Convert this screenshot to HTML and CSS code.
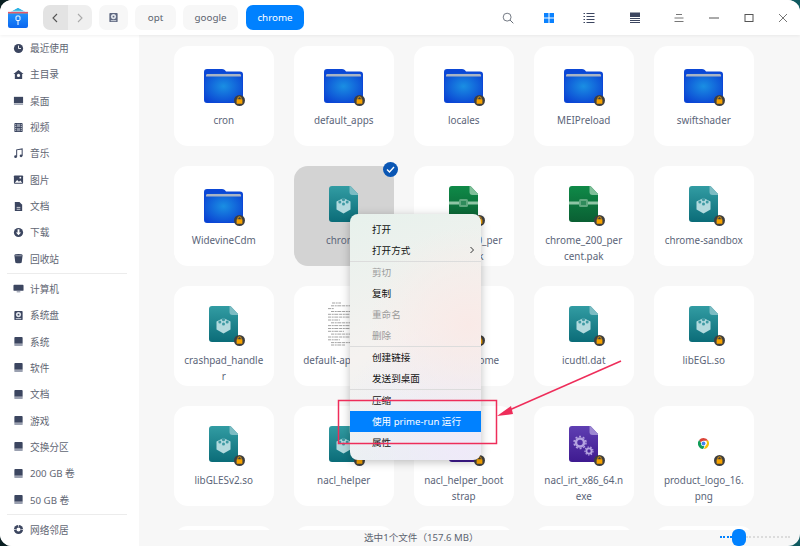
FILE: index.html
```html
<!DOCTYPE html>
<html>
<head>
    <title>chrome - 文件管理器</title>
    <link rel="stylesheet" href="styles.css">
</head>
<body>
    <svg class="sprite" xmlns="http://www.w3.org/2000/svg">
        <defs>
            <radialGradient id="g-folder" cx="0.5" cy="0.45" r="0.7">
                <stop offset="0" stop-color="#1a8fe3"/>
                <stop offset="1" stop-color="#0a3fd2"/>
            </radialGradient>
            <linearGradient id="g-teal" x1="0" y1="0" x2="0" y2="1">
                <stop offset="0" stop-color="#329ca3"/>
                <stop offset="1" stop-color="#0b6c78"/>
            </linearGradient>
            <linearGradient id="g-green" x1="0" y1="0" x2="0" y2="1">
                <stop offset="0" stop-color="#0f8a48"/>
                <stop offset="1" stop-color="#0a5f33"/>
            </linearGradient>
            <linearGradient id="g-purple" x1="0" y1="0" x2="0" y2="1">
                <stop offset="0" stop-color="#5f3fb2"/>
                <stop offset="1" stop-color="#3e1a90"/>
            </linearGradient>
            <linearGradient id="g-app" x1="0" y1="0" x2="0" y2="1">
                <stop offset="0" stop-color="#2aa0ff"/>
                <stop offset="1" stop-color="#0a66f0"/>
            </linearGradient>
        </defs>
        <symbol id="i-folder" viewBox="0 0 39 34">
            <path d="M3 0h15c2 0 3 1 4 2.500h14a3 3 0 0 1 3 3V31a3 3 0 0 1-3 3H3a3 3 0 0 1-3-3V3a3 3 0 0 1 3-3z" fill="#0b47d6"/>
            <path d="M2.500 4.500h34a1.500 1.500 0 0 1 1.500 1.500v25a2 2 0 0 1-2 2H3a2 2 0 0 1-2-2V6a1.500 1.500 0 0 1 1.500-1.500z" fill="url(#g-folder)"/>
            <path d="M2 6.500C2 5.700 2.500 5 3.500 5h32c1 0 1.500.7 1.500 1.500V7.500H2z" fill="#a9b4c4"/>
        </symbol>
        <symbol id="i-lib" viewBox="0 0 29 36">
            <path d="M3 0h18.500L29 8v25a3 3 0 0 1-3 3H3a3 3 0 0 1-3-3V3a3 3 0 0 1 3-3z" fill="url(#g-teal)"/>
            <path d="M20.500 0h1L29 8v1h-5.500a3 3 0 0 1-3-3z" fill="#7cbcc3"/>
            <path d="M7.500 15.500l7-3.500 7 3.500v8l-7 4-7-4z" fill="#b3dade"/>
            <circle cx="14.500" cy="13.500" r="1.700" fill="#3e9aa3"/>
            <circle cx="10.800" cy="16" r="1.500" fill="#3e9aa3"/>
            <circle cx="18.200" cy="16" r="1.500" fill="#3e9aa3"/>
            <circle cx="14.500" cy="18" r="1.500" fill="#3e9aa3"/>
        </symbol>
        <symbol id="i-pak" viewBox="0 0 29 36">
            <path d="M3 0h18.500L29 8v25a3 3 0 0 1-3 3H3a3 3 0 0 1-3-3V3a3 3 0 0 1 3-3z" fill="url(#g-green)"/>
            <path d="M20.500 0h1L29 8v1h-5.500a3 3 0 0 1-3-3z" fill="#7fbf99"/>
            <rect y="15.500" width="29" height="3" fill="#8fc5a5"/>
            <rect x="10" y="13" width="9" height="8" rx="1.500" fill="#5fa87f"/>
            <rect x="12" y="15" width="5" height="4" fill="#2e8b5b"/>
        </symbol>
        <symbol id="i-exe" viewBox="0 0 29 36">
            <path d="M3 0h18.500L29 8v25a3 3 0 0 1-3 3H3a3 3 0 0 1-3-3V3a3 3 0 0 1 3-3z" fill="url(#g-purple)"/>
            <path d="M20.500 0h1L29 8v1h-5.500a3 3 0 0 1-3-3z" fill="#9d88d2"/>
            <circle cx="11" cy="16.500" r="4" fill="none" stroke="#b4a3e0" stroke-width="2.500"/>
            <circle cx="11" cy="16.500" r="6" fill="none" stroke="#b4a3e0" stroke-width="1.500" stroke-dasharray="2 1.800"/>
            <circle cx="20" cy="25" r="2.600" fill="none" stroke="#b4a3e0" stroke-width="1.800"/>
            <circle cx="20" cy="25" r="4" fill="none" stroke="#b4a3e0" stroke-width="1.200" stroke-dasharray="1.500 1.300"/>
        </symbol>
        <symbol id="i-text" viewBox="0 0 32 44">
            <g stroke="#666" stroke-width="0.600" stroke-dasharray="3 0.700 2 0.600 4 0.800" fill="none">
                <path d="M4 1h9M3 3.800h22M0 6.600h6M3 9.500h22M0 12.300h26M0 15.100h26M0 18h12M3 20.800h22M0 23.600h26M0 26.500h26M0 29.300h16M3 32.100h22M0 35h26M0 37.800h12M3 40.600h22M3 43h14"/>
            </g>
        </symbol>
        <symbol id="i-lock" viewBox="0 0 11 11">
            <circle cx="5.500" cy="5.500" r="5.500" fill="#3f3f3f"/>
            <path d="M3.800 4.500V3.500a1.700 1.700 0 0 1 3.400 0v1" fill="none" stroke="#f7a300" stroke-width="0.900"/>
            <rect x="2.600" y="4.300" width="5.800" height="4.500" rx="0.600" fill="#f7a300"/>
        </symbol>
        <symbol id="i-logo" viewBox="0 0 11 11">
            <path d="M5.500 0a5.500 5.500 0 0 1 4.800 2.800H5.500a2.700 2.700 0 0 0-2.600 1.900L1.200 2A5.500 5.500 0 0 1 5.500 0z" fill="#db4437"/>
            <path d="M10.300 2.800A5.500 5.500 0 0 1 5.900 11l2-3.900a2.700 2.700 0 0 0 0-4.300z" fill="#f4c20d"/>
            <path d="M1.200 2l2.400 4.300a2.700 2.700 0 0 0 2.900 1.900L5.100 11A5.500 5.500 0 0 1 1.200 2z" fill="#0f9d58"/>
            <circle cx="5.500" cy="5.500" r="2.500" fill="#fff"/>
            <circle cx="5.500" cy="5.500" r="1.900" fill="#4285f4"/>
        </symbol>
        <symbol id="s-recent" viewBox="0 0 12 12">
            <circle cx="6" cy="6" r="5" fill="currentColor"/>
            <path d="M6 2.800V6h2.700" fill="none" stroke="#fff" stroke-width="1"/>
        </symbol>
        <symbol id="s-home" viewBox="0 0 12 12">
            <path d="M6 1l5.500 4.500H10V11H2V5.500H.5z" fill="currentColor"/>
            <circle cx="6" cy="7" r="1.700" fill="#fff"/>
        </symbol>
        <symbol id="s-desktop" viewBox="0 0 12 12">
            <rect x="1" y="2" width="10" height="7" fill="currentColor"/>
            <rect x="1" y="9.500" width="10" height="1.200" fill="#8d94a5"/>
        </symbol>
        <symbol id="s-video" viewBox="0 0 12 12">
            <rect x="1.500" y="1" width="9" height="10" rx="1" fill="currentColor"/>
            <path d="M3 2.500v7M9 2.500v7" stroke="#fff" stroke-width="1" stroke-dasharray="1 1"/>
            <rect x="4.300" y="2" width="3.400" height="3.500" fill="#8d94a5"/>
            <rect x="4.300" y="6.500" width="3.400" height="3.500" fill="#8d94a5"/>
        </symbol>
        <symbol id="s-music" viewBox="0 0 12 12">
            <path d="M4 9.500V2l6-1v7.500" fill="none" stroke="currentColor" stroke-width="1.100"/>
            <circle cx="2.800" cy="9.500" r="1.500" fill="currentColor"/>
            <circle cx="8.800" cy="8.500" r="1.500" fill="currentColor"/>
        </symbol>
        <symbol id="s-picture" viewBox="0 0 12 12">
            <rect x="1" y="1.500" width="10" height="9" rx="1" fill="currentColor"/>
            <path d="M2 9.500l2.500-3 2 2 1.500-1.500 2 2.500z" fill="#fff"/>
            <circle cx="8" cy="4" r="1" fill="#fff"/>
        </symbol>
        <symbol id="s-doc" viewBox="0 0 12 12">
            <path d="M2 1h5l3 3v7H2z" fill="currentColor"/>
            <path d="M4 7h4M4 9h4" stroke="#fff" stroke-width="0.800"/>
        </symbol>
        <symbol id="s-download" viewBox="0 0 12 12">
            <circle cx="6" cy="6" r="5" fill="currentColor"/>
            <path d="M5 2.500h2V6h1.800L6 9 3.200 6H5z" fill="#fff"/>
        </symbol>
        <symbol id="s-trash" viewBox="0 0 12 12">
            <path d="M1.500 2.500a4.500 1.500 0 0 1 9 0L9.500 10a3.500 1.200 0 0 1-7 0z" fill="currentColor"/>
            <path d="M2.500 3h7" stroke="#fff" stroke-width="0.500"/>
        </symbol>
        <symbol id="s-computer" viewBox="0 0 12 12">
            <rect x="0.500" y="2" width="11" height="6.500" rx="1" fill="currentColor"/>
            <rect x="4" y="9" width="4" height="1.200" fill="#8d94a5"/>
        </symbol>
        <symbol id="s-disk" viewBox="0 0 12 12">
            <rect x="1.500" y="1" width="9" height="10" rx="1" fill="currentColor"/>
            <circle cx="6" cy="5" r="2.800" fill="#dfe3ea"/>
            <circle cx="6" cy="5" r="1" fill="currentColor"/>
            <rect x="3" y="9" width="6" height="1" fill="#dfe3ea"/>
        </symbol>
        <symbol id="s-drive" viewBox="0 0 12 12">
            <path d="M2.500 1h7a1 1 0 0 1 1 1v6.500h-9V2a1 1 0 0 1 1-1z" fill="currentColor"/>
            <rect x="1.500" y="8.500" width="9" height="2.500" rx="0.500" fill="#9aa0b0"/>
        </symbol>
        <symbol id="s-network" viewBox="0 0 12 12">
            <circle cx="6" cy="6" r="5" fill="currentColor"/>
            <circle cx="6" cy="6" r="2.200" fill="#fff"/>
            <path d="M1 6h2M9 6h2M6 1v2" stroke="#fff" stroke-width="0.800"/>
        </symbol>
    </svg>

    <div class="window">
        <div class="toolbar">
            <svg class="app-logo" viewBox="0 0 20 20">
                <path d="M0 5.500L10 0l10 5.500V18a2 2 0 0 1-2 2H2a2 2 0 0 1-2-2z" fill="url(#g-app)"/>
                <path d="M0 5.500L10 0l10 5.500V6H0z" fill="#2bb5e0"/>
                <path d="M0 3.800h20V5.500H0z" fill="#e4566b"/>
                <path d="M0 2.800h20v1H0z" fill="#f1f4f8" opacity="0.800"/>
                <rect x="8" y="8" width="4" height="4.500" rx="1" fill="none" stroke="#fff"/>
                <path d="M10 12.500v4.500" stroke="#fff"/>
            </svg>
            <div class="nav">
                <button class="nav-btn nav-back">
                    <svg viewBox="0 0 10 10"><path d="M7 1L3 5l4 4" fill="none" stroke="#555" stroke-width="1.100"/></svg>
                </button>
                <button class="nav-btn nav-next">
                    <svg viewBox="0 0 10 10"><path d="M3 1l4 4-4 4" fill="none" stroke="#aaa" stroke-width="1.100"/></svg>
                </button>
            </div>
            <div class="crumb crumb-disk"><svg class="side-icon"><use href="#s-disk"/></svg></div>
            <div class="crumb crumb-opt">opt</div>
            <div class="crumb crumb-google">google</div>
            <div class="crumb crumb-chrome">chrome</div>

            <div class="tools">
                <svg class="tool" viewBox="0 0 14 14"><circle cx="6" cy="6" r="4.600" fill="none" stroke="#5d6570" stroke-width="1"/><path d="M9.400 9.400l3.800 3.800" stroke="#5d6570" stroke-width="1.100"/></svg>
                <svg class="tool" viewBox="0 0 12 12"><path d="M1 1h4.500v4.500H1zM6.500 1H11v4.500H6.500zM1 6.500h4.500V11H1zM6.500 6.500H11V11H6.500z" fill="#0a82ff"/></svg>
                <svg class="tool" viewBox="0 0 12 12"><path d="M3.500 1.500H11.500M3.500 4.500H11.500M3.500 7.500H11.500M3.500 10.500H11.500" stroke="#3c4660"/><path d="M.5 1.500H2M.5 4.500H2M.5 7.500H2M.5 10.500H2" stroke="#3c4660"/></svg>
                <svg class="tool" viewBox="0 0 12 12"><rect x="1" y="0.500" width="10" height="4.500" fill="#3c4660"/><path d="M1 6.500h10M1 8.500h10M1 10.500h10" stroke="#3c4660"/></svg>
                <svg class="tool" viewBox="0 0 12 12"><path d="M3 2.500h6M1.500 6h9M1.500 9.500h9" stroke="#777"/></svg>
                <svg class="tool" viewBox="0 0 12 12"><path d="M1 6h10" stroke="#555"/></svg>
                <svg class="tool" viewBox="0 0 12 12"><rect x="2" y="2.500" width="8" height="7" fill="none" stroke="#555"/></svg>
                <svg class="tool" viewBox="0 0 12 12"><path d="M2 2l8 8M10 2l-8 8" stroke="#666" stroke-width="0.900"/></svg>
            </div>
        </div>

        <div class="main">
            <div class="sidebar">
                <div class="side-item"><svg class="side-icon"><use href="#s-recent"/></svg>最近使用</div>
                <div class="side-item"><svg class="side-icon"><use href="#s-home"/></svg>主目录</div>
                <div class="side-item"><svg class="side-icon"><use href="#s-desktop"/></svg>桌面</div>
                <div class="side-item"><svg class="side-icon"><use href="#s-video"/></svg>视频</div>
                <div class="side-item"><svg class="side-icon"><use href="#s-music"/></svg>音乐</div>
                <div class="side-item"><svg class="side-icon"><use href="#s-picture"/></svg>图片</div>
                <div class="side-item"><svg class="side-icon"><use href="#s-doc"/></svg>文档</div>
                <div class="side-item"><svg class="side-icon"><use href="#s-download"/></svg>下载</div>
                <div class="side-item"><svg class="side-icon"><use href="#s-trash"/></svg>回收站</div>
                <div class="side-line"></div>
                <div class="side-item"><svg class="side-icon"><use href="#s-computer"/></svg>计算机</div>
                <div class="side-item"><svg class="side-icon"><use href="#s-disk"/></svg>系统盘</div>
                <div class="side-item"><svg class="side-icon"><use href="#s-drive"/></svg>系统</div>
                <div class="side-item"><svg class="side-icon"><use href="#s-drive"/></svg>软件</div>
                <div class="side-item"><svg class="side-icon"><use href="#s-drive"/></svg>文档</div>
                <div class="side-item"><svg class="side-icon"><use href="#s-drive"/></svg>游戏</div>
                <div class="side-item"><svg class="side-icon"><use href="#s-drive"/></svg>交换分区</div>
                <div class="side-item"><svg class="side-icon"><use href="#s-drive"/></svg>200 GB 卷</div>
                <div class="side-item"><svg class="side-icon"><use href="#s-drive"/></svg>50 GB 卷</div>
                <div class="side-line"></div>
                <div class="side-item"><svg class="side-icon"><use href="#s-network"/></svg>网络邻居</div>
            </div>

            <div class="content">
                <div class="grid">
                    <div class="card"><div class="thumb"><svg class="folder"><use href="#i-folder"/></svg><svg class="lock"><use href="#i-lock"/></svg></div><div class="name">cron</div></div>
                    <div class="card"><div class="thumb"><svg class="folder"><use href="#i-folder"/></svg><svg class="lock"><use href="#i-lock"/></svg></div><div class="name">default_apps</div></div>
                    <div class="card"><div class="thumb"><svg class="folder"><use href="#i-folder"/></svg><svg class="lock"><use href="#i-lock"/></svg></div><div class="name">locales</div></div>
                    <div class="card"><div class="thumb"><svg class="folder"><use href="#i-folder"/></svg><svg class="lock"><use href="#i-lock"/></svg></div><div class="name">MEIPreload</div></div>
                    <div class="card"><div class="thumb"><svg class="folder"><use href="#i-folder"/></svg><svg class="lock"><use href="#i-lock"/></svg></div><div class="name">swiftshader</div></div>

                    <div class="card"><div class="thumb"><svg class="folder"><use href="#i-folder"/></svg><svg class="lock"><use href="#i-lock"/></svg></div><div class="name">WidevineCdm</div></div>
                    <div class="card selected"><div class="thumb"><svg class="file"><use href="#i-lib"/></svg></div><div class="name">chrome</div><span class="check"><svg viewBox="0 0 15 15"><path d="M4 7.500l2.500 2.500L11 5" fill="none" stroke="#fff" stroke-width="1.400"/></svg></span></div>
                    <div class="card"><div class="thumb"><svg class="file"><use href="#i-pak"/></svg><svg class="lock"><use href="#i-lock"/></svg></div><div class="name">chrome_100_percent.pak</div></div>
                    <div class="card"><div class="thumb"><svg class="file"><use href="#i-pak"/></svg><svg class="lock"><use href="#i-lock"/></svg></div><div class="name">chrome_200_percent.pak</div></div>
                    <div class="card"><div class="thumb"><svg class="file"><use href="#i-lib"/></svg><svg class="lock"><use href="#i-lock"/></svg></div><div class="name">chrome-sandbox</div></div>

                    <div class="card"><div class="thumb"><svg class="file"><use href="#i-lib"/></svg><svg class="lock"><use href="#i-lock"/></svg></div><div class="name">crashpad_handler</div></div>
                    <div class="card"><div class="thumb"><svg class="textdoc"><use href="#i-text"/></svg><svg class="lock"><use href="#i-lock"/></svg></div><div class="name one-line">default-app-block</div></div>
                    <div class="card"><div class="thumb"><svg class="file"><use href="#i-lib"/></svg><svg class="lock"><use href="#i-lock"/></svg></div><div class="name">google-chrome</div></div>
                    <div class="card"><div class="thumb"><svg class="file"><use href="#i-lib"/></svg><svg class="lock"><use href="#i-lock"/></svg></div><div class="name">icudtl.dat</div></div>
                    <div class="card"><div class="thumb"><svg class="file"><use href="#i-lib"/></svg><svg class="lock"><use href="#i-lock"/></svg></div><div class="name">libEGL.so</div></div>

                    <div class="card"><div class="thumb"><svg class="file"><use href="#i-lib"/></svg><svg class="lock"><use href="#i-lock"/></svg></div><div class="name">libGLESv2.so</div></div>
                    <div class="card"><div class="thumb"><svg class="file"><use href="#i-lib"/></svg><svg class="lock"><use href="#i-lock"/></svg></div><div class="name">nacl_helper</div></div>
                    <div class="card"><div class="thumb"><svg class="file"><use href="#i-exe"/></svg><svg class="lock"><use href="#i-lock"/></svg></div><div class="name">nacl_helper_bootstrap</div></div>
                    <div class="card"><div class="thumb"><svg class="file"><use href="#i-exe"/></svg><svg class="lock"><use href="#i-lock"/></svg></div><div class="name">nacl_irt_x86_64.nexe</div></div>
                    <div class="card"><div class="thumb"><svg class="logo"><use href="#i-logo"/></svg><svg class="lock"><use href="#i-lock"/></svg></div><div class="name">product_logo_16.png</div></div>

                    <div class="card"></div>
                    <div class="card"></div>
                    <div class="card"></div>
                    <div class="card"></div>
                    <div class="card"></div>
                </div>
                <div class="status">
                    <span class="status-text">选中1个文件（157.6 MB）</span>
                    <div class="slider">
                        <span class="track-on"></span>
                        <span class="knob"></span>
                        <span class="track-off"></span>
                    </div>
                </div>
            </div>
        </div>

        <div class="menu">
            <div class="menu-item">打开</div>
            <div class="menu-item has-sub">打开方式<svg class="sub-arrow" viewBox="0 0 6 8"><path d="M1.500 1l3 3-3 3" fill="none" stroke="#333"/></svg></div>
            <div class="menu-line"></div>
            <div class="menu-item off">剪切</div>
            <div class="menu-item">复制</div>
            <div class="menu-item off">重命名</div>
            <div class="menu-item off">删除</div>
            <div class="menu-line"></div>
            <div class="menu-item">创建链接</div>
            <div class="menu-item">发送到桌面</div>
            <div class="menu-line"></div>
            <div class="menu-item">压缩</div>
            <div class="menu-item active">使用 prime-run 运行</div>
            <div class="menu-item">属性</div>
        </div>

        <svg class="markup" viewBox="0 0 800 546">
            <rect x="338.500" y="400.500" width="158" height="43" fill="none" stroke="#ee2d5a" stroke-width="1.500"/>
            <path d="M621 361L505 412" fill="none" stroke="#ee2d5a" stroke-width="1.500"/>
            <path d="M497 416l14-10 2 8z" fill="#ee2d5a"/>
        </svg>
    </div>
</body>
</html>
```

FILE: styles.css
```css
* {
    box-sizing: border-box;
}
html, body {
    margin: 0;
    height: 100%;
}
body {
    background: linear-gradient(90deg, #0a1f22 0%, #0f5a60 100%);
    font-family: "Noto Sans", "Noto Sans CJK SC", sans-serif;
    font-size: 10px;
    overflow: hidden;
}
.sprite {
    position: absolute;
    width: 0;
    height: 0;
}
.window {
    position: relative;
    width: 800px;
    height: 546px;
    background: #f7f7f7;
    border-radius: 12px;
    overflow: hidden;
    display: flex;
    flex-direction: column;
}

/* toolbar */
.toolbar {
    position: relative;
    z-index: 1;
    height: 35px;
    flex: none;
    display: flex;
    align-items: center;
    background: #fff;
    box-shadow: 0 1px 3px rgba(0, 0, 0, 0.06);
    padding-left: 8px;
}
.app-logo {
    width: 20px;
    height: 20px;
    margin-right: 15px;
}
.nav {
    display: flex;
    width: 49px;
    height: 25px;
    border-radius: 7px;
    overflow: hidden;
    margin-right: 7px;
}
.nav-btn {
    flex: 1;
    border: none;
    padding: 0;
    display: flex;
    align-items: center;
    justify-content: center;
}
.nav-btn svg {
    width: 10px;
    height: 10px;
}
.nav-back {
    background: #e3e3e3;
}
.nav-next {
    background: #efefef;
}
.crumb {
    height: 25px;
    border-radius: 7px;
    background: #f7f7f7;
    color: #5c6470;
    font-size: 9.800px;
    display: flex;
    align-items: center;
    justify-content: center;
}
.crumb-disk {
    width: 29px;
    margin-right: 7px;
}
.crumb-disk .side-icon {
    margin: 0;
    color: #5f6880;
}
.crumb-opt {
    width: 41px;
    margin-right: 7px;
}
.crumb-google {
    width: 55px;
    margin-right: 8px;
}
.crumb-chrome {
    width: 58px;
    background: #0081ff;
    color: #fff;
}
.tools {
    margin-left: auto;
    display: flex;
    align-items: center;
    height: 100%;
}
.tool {
    width: 12px;
    height: 12px;
    margin-right: 28px;
}
.tools .tool:nth-child(1) {
    margin-right: 29px;
}
.tools .tool:nth-child(3) {
    margin-right: 34px;
}
.tools .tool:nth-child(4) {
    margin-right: 32px;
}
.tools .tool:nth-child(5) {
    margin-right: 23px;
}
.tools .tool:nth-child(6) {
    margin-right: 22.500px;
}
.tools .tool:nth-child(7) {
    margin-right: 22.500px;
}
.tools .tool:nth-child(8) {
    margin-right: 11px;
}

/* sidebar */
.main {
    flex: 1;
    display: flex;
    min-height: 0;
}
.sidebar {
    width: 139px;
    flex: none;
    background: #fff;
}
.side-item {
    height: 26.330px;
    display: flex;
    align-items: center;
    padding-left: 13px;
    color: #5f6673;
    font-size: 9.700px;
}
.side-icon {
    width: 11px;
    height: 11px;
    margin-right: 6px;
    color: #3c4660;
}
.side-line {
    height: 1px;
    margin: 1px 12px 1.800px 7px;
    background: #ececec;
}

/* file grid */
.content {
    flex: 1;
    min-width: 0;
    display: flex;
    flex-direction: column;
}
.grid {
    flex: 1;
    min-height: 0;
    overflow: hidden;
    display: grid;
    grid-template-columns: repeat(5, 99.500px);
    grid-auto-rows: 99.500px;
    gap: 20.500px;
    padding: 11px 0 0 35px;
}
.card {
    position: relative;
    background: #fff;
    border-radius: 14px;
    padding-top: 16px;
    text-align: center;
}
.card.selected {
    background: #d3d3d3;
}
.thumb {
    position: relative;
    width: 48px;
    height: 48px;
    margin: 0 auto 3px;
    display: flex;
    align-items: center;
    justify-content: center;
}
.folder {
    width: 39px;
    height: 34px;
}
.file {
    width: 29px;
    height: 36px;
    margin-bottom: 4px;
}
.textdoc {
    width: 32px;
    height: 44px;
    margin: 0 0 5px 0;
    flex: none;
}
.logo {
    width: 11px;
    height: 11px;
    margin-bottom: 6px;
}
.lock {
    position: absolute;
    width: 11px;
    height: 11px;
    left: 34.500px;
    top: 32.500px;
}
.name {
    width: 81px;
    margin: 0 auto;
    line-height: 15.500px;
    font-size: 9.900px;
    color: #5a6478;
    word-break: break-all;
}
.name.one-line {
    white-space: nowrap;
    text-align: left;
}
.check {
    position: absolute;
    top: -4.500px;
    right: -4px;
    width: 15px;
    height: 15px;
    border-radius: 50%;
    background: #0a56b4;
    display: flex;
}

/* status bar */
.status {
    position: relative;
    height: 16px;
    flex: none;
    display: flex;
    align-items: center;
    color: #5c6470;
}
.status-text {
    margin: 0 0 2px 225px;
    font-size: 9.600px;
}
.slider {
    margin: 0 10px 2px auto;
    width: 70px;
    display: flex;
    align-items: center;
}
.track-on {
    width: 12px;
    border-top: 2px dotted #0081ff;
}
.knob {
    width: 14px;
    height: 17px;
    border-radius: 6px;
    background: #0081ff;
}
.track-off {
    flex: 1;
    border-top: 2px dotted #dcdcdc;
}

/* context menu */
.menu {
    position: absolute;
    z-index: 2;
    left: 350px;
    top: 214px;
    width: 131px;
    height: 246px;
    padding-top: 4.500px;
    border-radius: 8px;
    background:
        radial-gradient(circle at 90% 45%, #f9eae7 0%, rgba(249, 234, 231, 0) 55%),
        radial-gradient(circle at 85% 95%, #efeaf9 0%, rgba(239, 234, 249, 0) 50%),
        linear-gradient(160deg, #e7f1ec 0%, #f5f2f0 50%, #e6f1f2 100%);
    box-shadow: 0 2px 10px rgba(0, 0, 0, 0.25);
    color: #111;
    font-size: 9.600px;
}
.menu-item {
    height: 21px;
    display: flex;
    align-items: center;
    padding-left: 22px;
    position: relative;
}
.menu-item.off {
    color: #9a9a9a;
}
.menu-item.active {
    background: #0081ff;
    color: #fff;
}
.sub-arrow {
    position: absolute;
    right: 6px;
    width: 6px;
    height: 8px;
}
.menu-line {
    height: 1px;
    background: #dcdcdc;
}

/* red markup drawn over the screenshot */
.markup {
    position: absolute;
    z-index: 3;
    left: 0;
    top: 0;
    width: 800px;
    height: 546px;
    pointer-events: none;
}
```
